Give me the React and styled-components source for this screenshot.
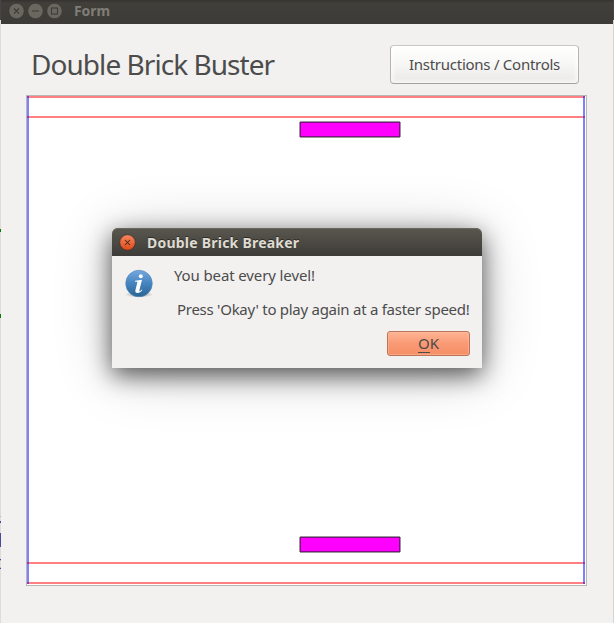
import React from "react";
import styled, { createGlobalStyle } from "styled-components";

const GlobalStyle = createGlobalStyle`
  * { box-sizing: border-box; }
  body {
    margin: 0;
    overflow: hidden;
    font-family: "Noto Sans", "Open Sans", sans-serif;
    color: #4c4c4c;
  }
`;

const Desktop = styled.div`
  position: relative;
  display: grid;
  grid-template-columns: 1px 612px 1px;
  width: 614px;
  height: 623px;
`;

const EdgeStrip = styled.svg`
  display: block;
  width: 1px;
  height: 623px;
`;

const Window = styled.main`
  display: flex;
  flex-direction: column;
  background: #f2f1f0;
`;

const TitleBar = styled.header`
  display: flex;
  align-items: center;
  height: 24px;
  flex: none;
  padding: 0 0 3px 7px;
  background: linear-gradient(#34332f 0, #403f3a 3px, #3c3b37 100%);
`;

const WindowControls = styled.svg`
  width: 56px;
  height: 18px;
  flex: none;
`;

const WindowTitle = styled.span`
  margin-left: 10px;
  font-size: 14px;
  font-weight: 700;
  line-height: 20px;
  letter-spacing: ${(p) => p.$spacing || 0}px;
  color: #807d78;
`;

const Toolbar = styled.div`
  display: flex;
  justify-content: space-between;
  height: 71px;
  flex: none;
  padding: 21px 34px 0 30px;
`;

const Heading = styled.h1`
  margin: -1px 0 0;
  font-size: 28px;
  font-weight: 400;
  line-height: 40px;
  letter-spacing: -0.95px;
  white-space: nowrap;
`;

const HelpButton = styled.button`
  width: 189px;
  height: 39px;
  padding: 0 0 1px;
  border: 1px solid #b6b4b1;
  border-top-color: #c9c7c5;
  border-bottom-color: #a5a3a0;
  border-radius: 4px;
  background: linear-gradient(#ffffff, #f8f8f7 45%, #e9e8e7);
  box-shadow: inset 0 0 4px 2px rgba(255, 255, 255, 0.7);
  font: 400 15px "Noto Sans", sans-serif;
  letter-spacing: -0.26px;
  color: #4c4c4c;
  white-space: nowrap;
`;

const Board = styled.section`
  width: 561px;
  height: 491px;
  margin-left: 25px;
  flex: none;
  border: 1px solid #b9b7b4;
  background: #fff;
`;

const Scene = styled.svg`
  display: block;
  width: 559px;
  height: 489px;
`;

const Dialog = styled.section`
  position: absolute;
  left: 112px;
  top: 228px;
  width: 370px;
  height: 140px;
  border-radius: 6px 6px 0 0;
  background: #f2f1f0;
  box-shadow: 0 7px 24px rgba(0, 0, 0, 0.64), 0 5px 60px rgba(0, 0, 0, 0.2);
`;

const DialogTitleBar = styled.header`
  display: flex;
  align-items: center;
  height: 28px;
  padding-left: 7px;
  border-radius: 6px 6px 0 0;
  background: linear-gradient(#59574e, #3d3c38);
  box-shadow: inset 0 1px 0 #6a685d;
`;

const CloseIcon = styled.svg`
  width: 17px;
  height: 17px;
  flex: none;
`;

const DialogTitle = styled(WindowTitle)`
  margin-left: 11px;
  padding-top: 2px;
  color: #dfdbd2;
  text-shadow: 0 -1px 0 #2b2a27;
`;

const DialogBody = styled.div`
  display: grid;
  grid-template-columns: 30px 1fr;
  column-gap: 20px;
  padding: 8px 12px 0 12px;
`;

const InfoIcon = styled.svg`
  width: 30px;
  height: 32px;
  margin-top: 4px;
`;

const Message = styled.div`
  font-size: 15px;
  line-height: 22px;
`;

const MessageLine = styled.p`
  margin: 0 0 12px;
  padding-left: ${(p) => p.$indent || 0}px;
  letter-spacing: ${(p) => p.$spacing}px;
  white-space: nowrap;
`;

const Actions = styled.footer`
  display: flex;
  justify-content: flex-end;
  padding-right: 12px;
  margin-top: -1px;
`;

const OkButton = styled.button`
  width: 83px;
  height: 25px;
  padding: 0;
  border: 1px solid #b9745a;
  border-radius: 3px;
  background: linear-gradient(#ffb495, #f99a75 50%, #f58e65);
  box-shadow: inset 0 0 0 1px rgba(255, 190, 160, 0.5);
  font: 400 15px/21px "Noto Sans", sans-serif;
  color: #4f4a47;
`;

const Mnemonic = styled.span`
  display: inline-block;
  height: 20px;
  border-bottom: 1px solid #4c4c4c;
`;

const GUIDES = [0, 20, 466, 486];
const WALLS = [0, 556];
const PADDLES = [25, 440];

function Paddle({ y }) {
  return (
    <g shapeRendering="crispEdges">
      <path d={`M273 ${y}h100v17h-100zM272 ${y + 1}h102v15h-102z`} fill="#999" />
      <rect x="273" y={y + 1} width="100" height="15" fill="#7f107f" />
      <rect x="274" y={y + 2} width="98" height="13" fill="#ff00ff" />
    </g>
  );
}

export default function App() {
  return (
    <>
      <GlobalStyle />
      <Desktop>
        <EdgeStrip viewBox="0 0 1 623" shapeRendering="crispEdges">
          <rect width="1" height="623" fill="#dedddc" />
          <rect width="1" height="20" fill="#46434a" />
          <path d="M0 229h1v3h-1zM0 314h1v4h-1z" fill="#087a08" />
          <path d="M0 521h1v2h-1zM0 533h1v14h-1zM0 559h1v1h-1zM0 568h1v1h-1z" fill="#4a4a9c" />
          <path d="M0 516h1v1h-1zM0 560h1v1h-1zM0 567h1v1h-1z" fill="#b5b5d5" />
        </EdgeStrip>
        <Window>
          <TitleBar>
            <WindowControls viewBox="0 0 56 18" fill="none" stroke="#3c3b37" strokeWidth="1.1">
              <g fill="#6a6761" stroke="#35342f" strokeWidth=".6">
                <circle cx="8.5" cy="9" r="7.7" />
                <circle cx="27.5" cy="9" r="7.7" />
                <circle cx="46.5" cy="9" r="7.7" />
              </g>
              <path d="M6 6.5l5 5M11 6.5l-5 5M24 9h7" />
              <rect x="43.5" y="6" width="6" height="6" />
            </WindowControls>
            <WindowTitle $spacing={-0.1}>Form</WindowTitle>
          </TitleBar>
          <Toolbar>
            <Heading>Double Brick Buster</Heading>
            <HelpButton>Instructions / Controls</HelpButton>
          </Toolbar>
          <Board>
            <Scene viewBox="0 0 559 489">
              <g shapeRendering="crispEdges">
                {GUIDES.map((y) => (
                  <rect key={y} x="0" y={y} width="558" height="2" fill="#ff8080" />
                ))}
                {WALLS.map((x) => (
                  <rect key={x} x={x} y="0" width="2" height="488" fill="#8080ff" />
                ))}
                {WALLS.map((x) =>
                  GUIDES.map((y) => (
                    <rect key={`${x}-${y}`} x={x} y={y} width="2" height="2" fill="#8040bf" />
                  ))
                )}
              </g>
              {PADDLES.map((y) => (
                <Paddle key={y} y={y} />
              ))}
            </Scene>
          </Board>
        </Window>
        <EdgeStrip viewBox="0 0 1 623" shapeRendering="crispEdges">
          <rect width="1" height="623" fill="#d5d4d3" />
          <rect width="1" height="20" fill="#46434a" />
        </EdgeStrip>
        <Dialog role="dialog">
          <DialogTitleBar>
            <CloseIcon viewBox="0 0 17 17">
              <defs>
                <linearGradient id="close" x2="0" y2="1">
                  <stop stopColor="#f58862" />
                  <stop offset="1" stopColor="#df4815" />
                </linearGradient>
              </defs>
              <circle cx="8.5" cy="8.5" r="7.8" fill="url(#close)" stroke="#3b2f29" strokeWidth=".7" />
              <path d="M6 6l5 5M11 6l-5 5" stroke="#4a2a1d" strokeWidth="1.05" />
            </CloseIcon>
            <DialogTitle $spacing={0.23}>Double Brick Breaker</DialogTitle>
          </DialogTitleBar>
          <DialogBody>
            <InfoIcon viewBox="0 0 30 32">
              <defs>
                <linearGradient id="info" x2="0" y2="1">
                  <stop stopColor="#75a8df" />
                  <stop offset=".5" stopColor="#4584bf" />
                  <stop offset="1" stopColor="#286594" />
                </linearGradient>
                <radialGradient id="ground">
                  <stop offset=".6" stopColor="#cfcecd" />
                  <stop offset="1" stopColor="#f2f1f0" />
                </radialGradient>
              </defs>
              <ellipse cx="15" cy="26.5" rx="14.5" ry="3" fill="url(#ground)" />
              <circle cx="15" cy="15.5" r="13.3" fill="url(#info)" stroke="#5486b5" strokeWidth=".6" />
              <circle cx="16.8" cy="8.2" r="2" fill="#fff" />
              <path
                d="M11.1 12.8l6.9-1-2.6 10.5c-.3 1.3.6 1.3 2.4-.8l.6.6c-2.4 3.6-8 4.2-7 .2l2-8c.1-.6-.2-.6-2.3-.5z"
                fill="#fff"
              />
            </InfoIcon>
            <Message>
              <MessageLine $spacing={-0.12}>You beat every level!</MessageLine>
              <MessageLine $indent={3} $spacing={-0.27}>
                Press 'Okay' to play again at a faster speed!
              </MessageLine>
            </Message>
          </DialogBody>
          <Actions>
            <OkButton>
              <Mnemonic>O</Mnemonic>K
            </OkButton>
          </Actions>
        </Dialog>
      </Desktop>
    </>
  );
}
